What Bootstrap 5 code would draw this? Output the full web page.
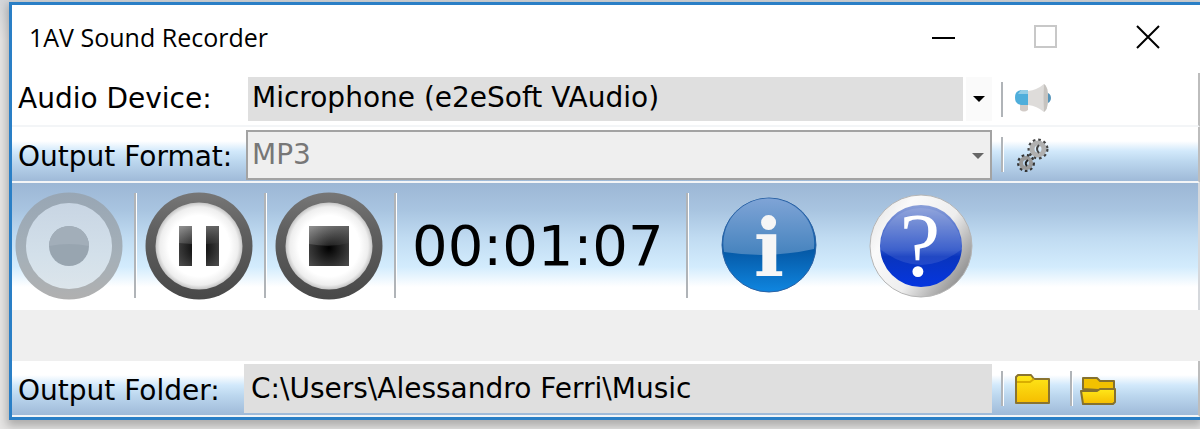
<!DOCTYPE html>
<html lang="en">
<head>
<meta charset="utf-8">
<meta name="viewport" content="width=device-width, initial-scale=1">
<title>1AV Sound Recorder</title>
<link href="https://cdn.jsdelivr.net/npm/bootstrap@5.3.0/dist/css/bootstrap.min.css" rel="stylesheet">
<style>
  body { background: #e2dad5; font-family: "DejaVu Sans", Verdana, sans-serif; color: #000; font-size: 28px; line-height: 34px; }
  .desk { padding: 2px 0 9px 9px; background: linear-gradient(#d3d6da, #e6e5e4 40px, #e6e5e4); }
  .app-window { background: #fff; border: 3px solid #2a7fc6; border-right: 0; box-shadow: 0 4px 9px 2px rgba(0, 0, 0, .25); }
  .title-bar { height: 68px; padding: 0 40px 4px 17px; }
  .title-bar h1 { font: 25px/34px "Open Sans", "Segoe UI", sans-serif; }
  .caption-btns { gap: 78px; }
  .plain-btn { border: 0; background: none; padding: 0; line-height: 0; }
  .tool-row { height: 54px; border-right: 2px solid #bdbdbd; border-bottom: 2px solid #f3f5f7; }
  .blue-row { height: 56px; padding-top: 1px; background: linear-gradient(#fff 0, #fff 14px, #d2e9fb 24px, #bdd8ef 34px, #9fbad8 100%); }
  .tool-row label { width: 236px; padding-left: 6px; white-space: nowrap; }
  .blue-row label { padding-top: 4px; }
  .tool-row.folder label { width: 232px; }
  .field { border: 0; border-radius: 0; background-color: #dfdfdf; color: #000; font: inherit; padding: 0 7px; flex: 1 1 0; min-width: 0; appearance: none; outline-offset: -2px; }
  .field-device { height: 44px; background: linear-gradient(90deg, transparent calc(100% - 3px), #fff 0) , #dfdfdf; padding: 0 4px 2px; }
  .field-format { height: 50px; border: 2px solid #a3a3a3; background: #efefef; color: #777; opacity: 1; padding-left: 4px; }
  .field-folder { height: 49px; }
  .arrow-box { width: 26px; height: 44px; background: #fafafa; }
  .format-wrap { margin-left: -2px; }
  .format-arrow { right: 8px; top: 22px; line-height: 0; pointer-events: none; }
  .row-tools { width: 206px; padding-left: 9px; }
  .sep { width: 3px; height: 35px; border-left: 2px solid #b0b4b8; border-right: 1px solid #fff; }
  .transport { height: 127px; padding: 0 0 2px 3px; border-right: 2px solid #d5d8dc; background: linear-gradient(#9cb7d5 0, #a9c5e1 28px, #c1dcf2 56px, #d3ecfd 84px, #fff 104px); }
  .transport .sep { height: 105px; margin: 0 8px 0 11px; }
  .clock { font-size: 56px; line-height: 66px; width: 281px; padding-left: 7px; }
  .help-btn { margin-left: 44px; }
  .status-strip { height: 51px; background: #efefef; }
</style>
</head>
<body>
<div class="desk">
<main class="app-window">
  <header class="title-bar d-flex align-items-center justify-content-between">
    <h1 class="m-0">1AV Sound Recorder</h1>
    <div class="caption-btns d-flex align-items-center">
      <button class="plain-btn" type="button" aria-label="Minimize"><svg width="24" height="24"><path d="M0 13h23" stroke="#000" stroke-width="2"/></svg></button>
      <button class="plain-btn" type="button" aria-label="Maximize" disabled><svg width="24" height="24"><rect x="1" y="1" width="21" height="21" fill="none" stroke="#c8c8c8" stroke-width="2"/></svg></button>
      <button class="plain-btn" type="button" aria-label="Close"><svg width="24" height="24"><path d="M1 1L23 23M23 1L1 23" stroke="#000" stroke-width="2"/></svg></button>
    </div>
  </header>

  <div class="tool-row d-flex align-items-center">
    <label for="device">Audio Device:</label>
    <div class="d-flex flex-grow-1">
      <select id="device" class="field field-device"><option>Microphone (e2eSoft VAudio)</option></select>
      <span class="arrow-box d-flex align-items-center justify-content-center"><svg width="12" height="8"><path d="M0 1h12L6 7z"/></svg></span>
    </div>
    <div class="row-tools d-flex align-items-center">
      <span class="sep"></span>
      <button class="plain-btn ms-2" type="button" aria-label="Audio settings">
        <svg width="42" height="40" viewBox="0 0 42 40">
          <path d="M8 24h8v7q-4 3-8 0z" fill="#d2cbc7"/>
          <path d="M9 11h7v15H9Q3 25 3 18.500T9 11z" fill="#4faedb"/><path d="M9 11h7v4H6z" fill="#93cde6"/>
          <path d="M33 13q6 1 6 6t-6 6z" fill="#5594b9"/>
          <path d="M16 12Q25 11 32 5q4 2 4 14t-4 14q-7-6-16-7z" fill="#dedcda"/><path d="M32 5q4 2 4 14t-4 14q-1-14 0-28z" fill="#c6c3bf"/>
        </svg>
      </button>
    </div>
  </div>

  <div class="tool-row blue-row d-flex align-items-center">
    <label for="format">Output Format:</label>
    <div class="format-wrap position-relative d-flex flex-grow-1">
      <select id="format" class="field field-format" disabled><option>MP3</option></select>
      <span class="format-arrow position-absolute"><svg width="12" height="8"><path d="M0 1h12L6 7z" fill="#666"/></svg></span>
    </div>
    <div class="row-tools d-flex align-items-center">
      <span class="sep"></span>
      <button class="plain-btn ms-2" type="button" aria-label="Format settings">
        <svg width="42" height="40" viewBox="0 0 42 40" fill="none">
          <circle cx="26" cy="14" r="8.500" stroke="#444" stroke-width="4" stroke-dasharray="2.4 2.6"/>
          <circle cx="26" cy="14" r="6" stroke="#b0b0b0" stroke-width="5"/><path d="M27 10q-4 4 0 8" stroke="#444" stroke-width="2"/>
          <circle cx="14" cy="28" r="7" stroke="#333" stroke-width="4" stroke-dasharray="2.4 2.4"/>
          <circle cx="14" cy="28" r="5" stroke="#999" stroke-width="4"/><path d="M16 25q-4 3-1 6" stroke="#222" stroke-width="2"/>
        </svg>
      </button>
    </div>
  </div>

  <section class="transport d-flex align-items-center" aria-label="Recording controls">
    <button class="plain-btn" type="button" aria-label="Record" disabled>
      <svg width="108" height="108" viewBox="0 0 108 108">
        <defs>
          <linearGradient id="ring" x2="0" y2="1"><stop stop-color="#777"/><stop offset=".35" stop-color="#606060"/><stop offset="1" stop-color="#484848"/></linearGradient>
          <linearGradient id="dimring" x2="0" y2="1"><stop stop-color="#98a6b4"/><stop offset=".6" stop-color="#a5b0b8"/><stop offset="1" stop-color="#b0b0b0"/></linearGradient>
          <linearGradient id="dimface" x2="0" y2="1"><stop stop-color="#c8d5e3"/><stop offset=".6" stop-color="#d3e0ea"/><stop offset="1" stop-color="#dce5eb"/></linearGradient>
          <radialGradient id="face"><stop offset=".7" stop-color="#fff"/><stop offset=".9" stop-color="#eee"/><stop offset="1" stop-color="#c4c4c4"/></radialGradient>
          <radialGradient id="ink" cy=".55" r=".65"><stop stop-color="#000"/><stop offset="1" stop-color="#4c4c4c"/></radialGradient>
          <linearGradient id="shine" x2="1" y2="1"><stop stop-color="#aaa" stop-opacity=".75"/><stop offset="1" stop-color="#444" stop-opacity=".2"/></linearGradient>
        </defs>
        <circle cx="54" cy="54" r="53.500" fill="url(#dimring)"/>
        <circle cx="54" cy="54" r="43" fill="url(#dimface)"/>
        <circle cx="54" cy="54" r="20" fill="#98a5b0"/><path d="M34 54a20 20 0 0 1 40 0q-20-4-40 0z" fill="#a2aeb9"/>
      </svg>
    </button>
    <span class="sep"></span>
    <button class="plain-btn" type="button" aria-label="Pause">
      <svg width="108" height="108" viewBox="0 0 108 108">
        <circle cx="54" cy="54" r="53.500" fill="url(#ring)"/><circle cx="54" cy="54" r="43.500" fill="url(#face)"/>
        <path d="M34 34h13v40H34zM61 34h13v40H61z" fill="url(#ink)"/><path d="M34 34h13v18l-13-1zM61 34h13v17l-13 1z" fill="url(#shine)"/>
      </svg>
    </button>
    <span class="sep"></span>
    <button class="plain-btn" type="button" aria-label="Stop">
      <svg width="108" height="108" viewBox="0 0 108 108">
        <circle cx="54" cy="54" r="53.500" fill="url(#ring)"/><circle cx="54" cy="54" r="43.500" fill="url(#face)"/>
        <path d="M34 34h40v40H34z" fill="url(#ink)"/><path d="M34 34h40v17q-18 5-40 1z" fill="url(#shine)"/>
      </svg>
    </button>
    <span class="sep"></span>
    <time class="clock">00:01:07</time>
    <span class="sep m-0"></span>
    <button class="plain-btn ms-4" type="button" aria-label="Information">
      <svg width="110" height="108" viewBox="0 0 110 108">
        <defs>
          <linearGradient id="info" x2="0" y2="1"><stop stop-color="#4a7fc0"/><stop offset=".55" stop-color="#0558a5"/><stop offset="1" stop-color="#0f86e0"/></linearGradient>
          <linearGradient id="gloss" x2="0" y2="1"><stop stop-color="#7fa4d6"/><stop offset="1" stop-color="#4583be"/></linearGradient>
        </defs>
        <circle cx="56" cy="53" r="47" fill="url(#info)" stroke="#2b62a4"/>
        <path d="M11 60a45.500 45.500 0 1 1 90-3q-45 10-90 3z" fill="url(#gloss)"/>
        <text x="56" y="84" text-anchor="middle" font-family="DejaVu Serif" font-weight="700" font-size="80" fill="#f6f6f6">i</text>
      </svg>
    </button>
    <button class="plain-btn help-btn" type="button" aria-label="Help">
      <svg width="108" height="108" viewBox="0 0 108 108">
        <defs>
          <linearGradient id="rim" x2="1" y2=".7"><stop stop-color="#ddd"/><stop offset=".3" stop-color="#fafafa"/><stop offset=".65" stop-color="#eee"/><stop offset="1" stop-color="#8f8f8f"/></linearGradient>
          <linearGradient id="help" x2="0" y2="1"><stop stop-color="#8a9fd8"/><stop offset=".55" stop-color="#274fc7"/><stop offset=".63" stop-color="#0934bd"/><stop offset="1" stop-color="#0536e0"/></linearGradient>
        </defs>
        <circle cx="54" cy="54" r="51" fill="url(#rim)" stroke="#b5b5b5"/>
        <circle cx="54" cy="54" r="41" fill="url(#help)"/>
        <path d="M13 57a41 41 0 1 1 82 0q-41 32-82 0z" fill="#fff" opacity=".1"/>
        <text x="53" y="84" text-anchor="middle" font-family="Liberation Serif" font-weight="400" font-size="92" fill="#fff">?</text>
      </svg>
    </button>
  </section>

  <div class="status-strip"></div>

  <div class="tool-row folder blue-row d-flex align-items-center">
    <label for="folder">Output Folder:</label>
    <input id="folder" class="field field-folder" type="text" value="C:\Users\Alessandro Ferri\Music">
    <div class="row-tools d-flex align-items-center">
      <span class="sep"></span>
      <button class="plain-btn ms-2" type="button" aria-label="Choose folder">
        <svg width="42" height="40" viewBox="0 0 42 40"><defs><linearGradient id="gold" x2="0" y2="1"><stop stop-color="#ffe81a"/><stop offset="1" stop-color="#f5bd00"/></linearGradient></defs>
          <path d="M4 8l2-2h13l3 4h15v24H4z" fill="url(#gold)" stroke="#8a7430" stroke-width="2" stroke-linejoin="round"/><path d="M5 13h13l4-3" fill="none" stroke="#d9ae00" stroke-width="2"/></svg>
      </button>
      <span class="sep ms-3"></span>
      <button class="plain-btn ms-1" type="button" aria-label="Open folder">
        <svg width="42" height="40" viewBox="0 0 42 40"><path d="M6 20V9h14l3 3h14v10z" fill="#f2c100" stroke="#85712e" stroke-width="2" stroke-linejoin="round"/><path d="M4 22h16l3-2h15v13l-2 2H6z" fill="url(#gold)" stroke="#85712e" stroke-width="2" stroke-linejoin="round"/></svg>
      </button>
    </div>
  </div>
</main>
</div>
<script src="https://cdn.jsdelivr.net/npm/bootstrap@5.3.0/dist/js/bootstrap.bundle.min.js"></script>
</body>
</html>
